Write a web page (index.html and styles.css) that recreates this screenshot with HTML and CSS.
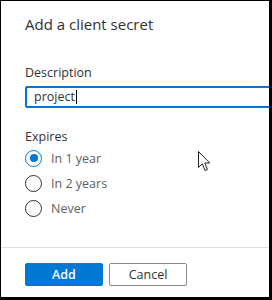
FILE: index.html
```html
<!DOCTYPE html>
<html lang="en">
<head>
    <meta charset="UTF-8">
    <meta name="viewport" content="width=device-width, initial-scale=1.0">
    <title>Add a client secret</title>
    <link rel="stylesheet" href="styles.css">
</head>
<body>
    <div class="frame">
        <div class="panel">
            <h2 class="title">Add a client secret</h2>

            <label class="field-label">Description</label>
            <div class="text-field">project<span class="caret"></span></div>

            <div class="field-label expires">Expires</div>
            <div class="radio-group">
                <div class="radio-row">
                    <span class="radio checked"></span>
                    <span class="radio-text">In 1 year</span>
                </div>
                <div class="radio-row">
                    <span class="radio"></span>
                    <span class="radio-text">In 2 years</span>
                </div>
                <div class="radio-row">
                    <span class="radio"></span>
                    <span class="radio-text">Never</span>
                </div>
            </div>
        </div>

        <div class="footer">
            <button type="button" class="btn btn-primary">Add</button>
            <button type="button" class="btn btn-default">Cancel</button>
        </div>

        <!-- mouse pointer sitting over the dialog -->
        <svg class="pointer" width="13" height="21" viewBox="0 0 13 21">
            <path d="M0.5 0.5 L0.5 16.5 L4.3 12.8 L7 19.5 L9.4 18.5 L6.8 12 L11.8 12 Z" fill="#fff" stroke="#222" stroke-width="1" stroke-linejoin="round"/>
        </svg>
    </div>
</body>
</html>
```

FILE: styles.css
```css
/* Dialog snippet */
body {
    margin: 0;
    font-family: "Open Sans", "Noto Sans", Arial, sans-serif;
    background-color: #ffffff;
}

.frame {
    position: relative;
    width: 272px;
    height: 300px;
    box-sizing: border-box;
    border-style: solid;
    border-color: #000000;
    border-width: 1px 3px 3px 1px;
    display: flex;
    flex-direction: column;
    overflow: hidden;
    background-color: #ffffff;
}

.panel {
    flex: 1;
    padding: 13px 0 0 24px;
}

.title {
    margin: 0;
    font-size: 15px;
    font-weight: 400;
    color: #323130; /* near black heading */
    line-height: 20px;
}

.field-label {
    display: block;
    margin-top: 30px;
    font-size: 12.5px;
    color: #323130;
    line-height: 17px;
}

.text-field {
    margin-top: 5px;
    width: 260px;
    height: 18px;
    border: 2px solid #0078d4; /* focused field */
    border-radius: 2px;
    padding-left: 7px;
    font-size: 12.5px;
    line-height: 18px;
    color: #323130;
}

.caret {
    display: inline-block;
    width: 1px;
    height: 14px;
    margin-left: 1px;
    background-color: #000000;
    vertical-align: -3px;
}

.expires {
    margin-top: 20px;
}

.radio-group {
    display: flex;
    flex-direction: column;
    gap: 7px;
    margin-top: 4px;
}

.radio-row {
    display: flex;
    align-items: center;
    gap: 9px;
    height: 18px;
}

.radio {
    width: 17px;
    height: 17px;
    box-sizing: border-box;
    border: 1.5px solid #323130;
    border-radius: 50%;
    display: flex;
    align-items: center;
    justify-content: center;
}

.radio.checked {
    border-color: #0078d4;
}

.radio.checked::after {
    content: "";
    width: 8px;
    height: 8px;
    border-radius: 50%;
    background-color: #0078d4;
}

.radio-text {
    font-size: 12.5px;
    color: #605e5c; /* muted option text */
}

.footer {
    border-top: 1px solid #e1dfdd;
    padding: 15px 0 11px 24px;
    display: flex;
    gap: 6px;
}

.btn {
    width: 78px;
    height: 23px;
    border-radius: 2px;
    font-family: inherit;
    font-size: 12.5px;
    padding: 0;
    cursor: pointer;
}

.btn-primary {
    background-color: #0078d4;
    border: 1px solid #0078d4;
    color: #ffffff;
    font-weight: 600;
}

.btn-default {
    background-color: #ffffff;
    border: 1px solid #8a8886;
    color: #323130;
}

.pointer {
    position: absolute;
    left: 197px;
    top: 150px;
}
```
